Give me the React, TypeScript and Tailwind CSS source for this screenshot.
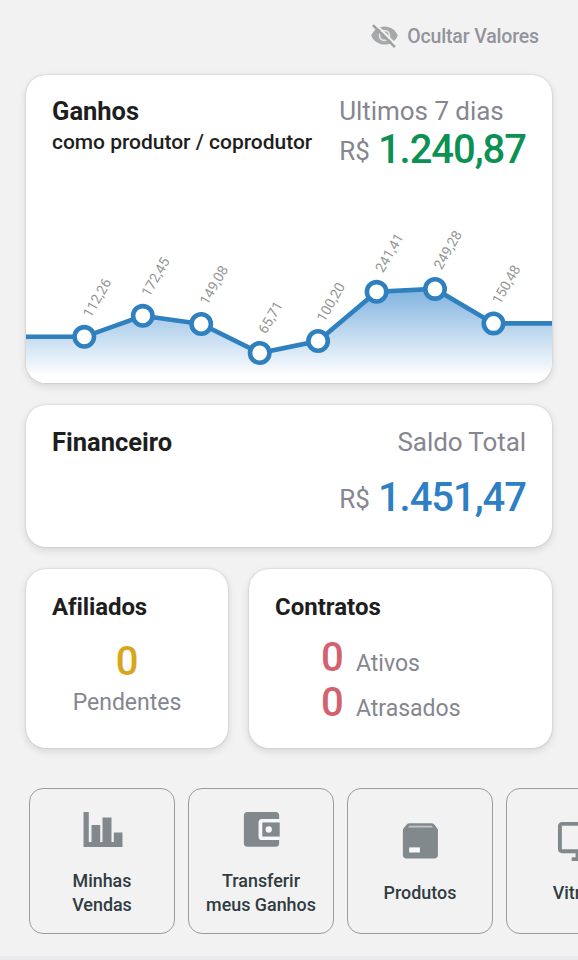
import type { ReactNode } from "react";

const points = [
  { x: 58.3, y: 136.8, label: "112,26" },
  { x: 116.8, y: 115.8, label: "172,45" },
  { x: 175.2, y: 124, label: "149,08" },
  { x: 233.7, y: 153, label: "65,71" },
  { x: 292.1, y: 141, label: "100,20" },
  { x: 350.6, y: 91.8, label: "241,41" },
  { x: 409, y: 88.9, label: "249,28" },
  { x: 467.5, y: 123.4, label: "150,48" },
];

function EarningsChart() {
  const line = `0,136.8 ${points.map((p) => `${p.x},${p.y}`).join(" ")} 526,123.4`;
  return (
    <svg width="526" height="183" viewBox="0 0 526 183" className="block shrink-0">
      <defs>
        <linearGradient id="area" x1="0" y1="88" x2="0" y2="177" gradientUnits="userSpaceOnUse">
          <stop offset="0" stopColor="#7fb2df" />
          <stop offset="1" stopColor="#ffffff" />
        </linearGradient>
      </defs>
      <polygon points={`${line} 526,183 0,183`} fill="url(#area)" />
      <polyline points={line} fill="none" stroke="#2f80bf" strokeWidth="4.6" />
      {points.map((p) => (
        <g key={p.label}>
          <circle cx={p.x} cy={p.y} r="9.7" fill="#fff" stroke="#2f80bf" strokeWidth="4.6" />
          <text
            transform={`translate(${p.x + 6.4} ${p.y - 18.3}) rotate(-60)`}
            fontSize="14"
            fill="#959595"
          >
            {p.label}
          </text>
        </g>
      ))}
    </svg>
  );
}

function Card({ className, children }: { className: string; children: ReactNode }) {
  return (
    <section
      className={`overflow-hidden rounded-[20px] bg-white shadow-[0_0_2px_rgba(0,0,0,0.2),0_3px_8px_rgba(0,0,0,0.12)] ${className}`}
    >
      {children}
    </section>
  );
}

function Amount({ className, value }: { className: string; value: string }) {
  return (
    <p className="flex items-baseline pt-px text-[26px] leading-[44px]">
      <span className="-translate-y-[3px]">R$</span>
      <span className={`ml-[8px] text-[40px] font-medium tracking-[-1.05px] ${className}`}>
        {value}
      </span>
    </p>
  );
}

function Tile({ icon, children }: { icon: ReactNode; children: ReactNode }) {
  return (
    <div className="flex size-[146px] shrink-0 flex-col items-center justify-center rounded-[14px] border border-[#9b9b9b] text-center text-[17.9px] leading-[23.5px] font-medium text-[#303c42]">
      <div className="mb-[16px] size-[47px]">{icon}</div>
      <div>{children}</div>
    </div>
  );
}

const iconProps = { viewBox: "0 0 24 24", className: "size-full", fill: "#82898d" };

export default function App() {
  return (
    <main className="flex h-[960px] w-[578px] flex-col overflow-hidden bg-[#f2f2f2] font-[Roboto,sans-serif]">
      <header className="flex h-[75px] items-center justify-end gap-[8px] pr-[39px] pb-[2px] text-[19.5px] font-medium tracking-[-0.15px] text-[#92949d]">
        <svg viewBox="0 0 24 24" className="-mt-[2px] size-[29px]" fill="none">
          <path
            d="M1 12c1.730-4.390 6-7.500 11-7.500s9.270 3.110 11 7.500c-1.730 4.390-6 7.500-11 7.500S2.730 16.390 1 12z"
            fill="#a7a8a9"
          />
          <circle cx="12" cy="12" r="4.1" stroke="#e4e4e4" strokeWidth="1.500" />
          <path d="M4.300 2.300 21.800 19.800" stroke="#f2f2f2" strokeWidth="1.700" />
          <path d="M2.400 3.400 20.600 21.600" stroke="#a0a1a2" strokeWidth="2.100" />
        </svg>
        <span>Ocultar Valores</span>
      </header>

      <div className="flex flex-col gap-[22px] px-[26px]">
        <Card className="flex h-[308px] flex-col justify-between">
          <div className="flex justify-between px-[26px] pt-[20px]">
            <div className="text-[#1e1e1e]">
              <h2 className="text-[25.5px] leading-[32px] font-bold">Ganhos</h2>
              <p className="text-[21px] leading-[31px] font-medium tracking-[-0.02px] whitespace-nowrap">
                como produtor / coprodutor
              </p>
            </div>
            <div className="text-[#85868f]">
              <p className="text-[26px] leading-[32px] tracking-[-0.05px]">Ultimos 7 dias</p>
              <Amount className="text-[#0c9155]" value="1.240,87" />
            </div>
          </div>
          <EarningsChart />
        </Card>

        <Card className="flex h-[142px] justify-between px-[26px] pt-[20px]">
          <h2 className="text-[25.5px] leading-[34px] font-bold text-[#1e1e1e]">Financeiro</h2>
          <div className="flex flex-col items-end gap-[16px] text-[#85868f]">
            <p className="text-[26px] leading-[34px] tracking-[-0.08px]">Saldo Total</p>
            <Amount className="text-[#2d80c3]" value="1.451,47" />
          </div>
        </Card>

        <div className="flex gap-[21px]">
          <Card className="h-[179px] w-[202px] px-[26px] pt-[21px]">
            <h2 className="text-[24px] leading-[34px] font-bold tracking-[-0.1px] text-[#1e1e1e]">
              Afiliados
            </h2>
            <div className="flex flex-col items-center pt-[16px]">
              <span className="text-[40px] leading-[44px] font-medium text-[#d9a51d]">0</span>
              <span className="text-[23px] leading-[37px] text-[#85868f]">Pendentes</span>
            </div>
          </Card>
          <Card className="h-[179px] w-[303px] px-[26px] pt-[21px]">
            <h2 className="text-[24px] leading-[34px] font-bold text-[#1e1e1e]">Contratos</h2>
            <div className="grid grid-cols-[24px_auto] items-baseline justify-start gap-x-[11px] pt-[11px] pl-[46px] text-[23px] leading-[24px] text-[#85868f]">
              <span className="text-[40px] leading-[45px] font-medium text-[#d4616f]">0</span>
              <span>Ativos</span>
              <span className="text-[40px] leading-[45px] font-medium text-[#d4616f]">0</span>
              <span>Atrasados</span>
            </div>
          </Card>
        </div>
      </div>

      <nav className="flex gap-[13px] pt-[40px] pl-[29px]">
        <Tile
          icon={
            <svg {...iconProps} viewBox="0 0 47 47">
              <path d="M4.500 6h5.300v30h2.700V19h8.700v17h2.300V11.500h9V36h2.300V26.500h8.700V41h-39z" />
            </svg>
          }
        >
          Minhas
          <br />
          Vendas
        </Tile>
        <Tile
          icon={
            <svg {...iconProps}>
              <rect x="3" y="3" width="18" height="17.800" rx="1.800" />
              <path
                d="M21.300 6.600h-9.200c-.9 0-1.600.7-1.600 1.600v7.600c0 .9.7 1.600 1.600 1.600h9.200z"
                fill="#f8f8f8"
              />
              <path d="M12.400 8.400h8.900v7.200h-8.900z" />
              <circle cx="15.700" cy="12" r="1.600" fill="#f8f8f8" />
            </svg>
          }
        >
          Transferir
          <br />
          meus Ganhos
        </Tile>
        <Tile
          icon={
            <svg {...iconProps}>
              <path d="M6.200 2.700h11.600c.4 0 .7.100 1 .4L20.500 5.200c.3.400.4.700.4 1.100V18.900c0 1-.8 1.800-1.800 1.800H4.800c-1 0-1.800-.8-1.800-1.800V6.300c0-.4.100-.7.400-1.100L5.200 3.100c.3-.3.600-.4 1-.4z" />
              <path d="M6.300 4h11.400l.7.900H5.600z" fill="#c3c6c7" />
              <path d="M6.200 15h5.500v2.600H6.200z" fill="#fafafa" />
            </svg>
          }
        >
          Produtos
        </Tile>
        <Tile
          icon={
            <svg {...iconProps}>
              <path d="M21 2H3c-1.100 0-2 .9-2 2v12c0 1.100.9 2 2 2h7v2H8v2h8v-2h-2v-2h7c1.100 0 2-.9 2-2V4c0-1.100-.9-2-2-2zm0 14H3V4h18v12z" />
            </svg>
          }
        >
          Vitrine
        </Tile>
      </nav>
      <div className="mt-auto h-[4px] shrink-0 bg-[#e9e9ee]" />
    </main>
  );
}
